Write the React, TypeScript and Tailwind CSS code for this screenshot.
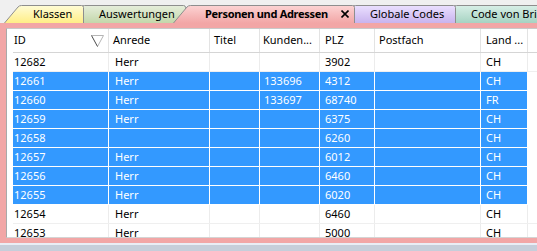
import React from "react";

type TabDef = {
  label: string;
  w: number;
  ml: number;
  from: string;
  to: string;
  z: string;
  pl: string;
  active?: boolean;
};

const tabs: TabDef[] = [
  { label: "Klassen", w: 80, ml: 0, from: "#fffcd6", to: "#ffee86", z: "z-40", pl: "pl-[29px]" },
  { label: "Auswertungen", w: 119, ml: -17, from: "#e6eedb", to: "#c3d7aa", z: "z-30", pl: "pl-[32px]" },
  { label: "Personen und Adressen", w: 182, ml: -13, from: "#fcd3d3", to: "#f2a6a6", z: "z-50", pl: "pl-[32px]", active: true },
  { label: "Globale Codes", w: 118, ml: -17, from: "#ebe0ff", to: "#c8b3ee", z: "z-20", pl: "pl-[32px]" },
  { label: "Code von Bri", w: 121, ml: -17, from: "#d8efe7", to: "#a6d3c2", z: "z-10", pl: "pl-[32px]" },
];

function TabShape({ w, from, to, id }: { w: number; from: string; to: string; id: string }) {
  const d = `M0.5,18 L14,2 Q15.3,0.5 17.5,0.5 L${w - 2.5},0.5 Q${w - 0.5},0.5 ${w - 0.5},2.5 L${w - 0.5},18`;
  return (
    <svg className="absolute inset-0" width={w} height={18} viewBox={`0 0 ${w} 18`}>
      <defs>
        <linearGradient id={id} x1="0" y1="0" x2="0" y2="1">
          <stop offset="0" stopColor={from} />
          <stop offset="1" stopColor={to} />
        </linearGradient>
      </defs>
      <path d={d + " Z"} fill={`url(#${id})`} stroke="none" />
      <path d={d} fill="none" stroke="#8e8e8e" strokeWidth={1} />
    </svg>
  );
}

const cols = [
  { name: "ID", w: "w-[96px]", hp: "pl-[1px]", dp: "pl-[1px]" },
  { name: "Anrede", w: "w-[101px]", hp: "pl-[4px]", dp: "pl-[6px]" },
  { name: "Titel", w: "w-[50px]", hp: "pl-[4px]", dp: "pl-[4px]" },
  { name: "Kunden...", w: "w-[60px]", hp: "pl-[3px]", dp: "pl-[4px]" },
  { name: "PLZ", w: "w-[55px]", hp: "pl-[5px]", dp: "pl-[5px]" },
  { name: "Postfach", w: "w-[106px]", hp: "pl-[4px]", dp: "pl-[4px]" },
  { name: "Land ...", w: "w-[47px]", hp: "pl-[5px]", dp: "pl-[5px]" },
];

const rows: { v: string[]; sel: boolean }[] = [
  { v: ["12682", "Herr", "", "", "3902", "", "CH"], sel: false },
  { v: ["12661", "Herr", "", "133696", "4312", "", "CH"], sel: true },
  { v: ["12660", "Herr", "", "133697", "68740", "", "FR"], sel: true },
  { v: ["12659", "Herr", "", "", "6375", "", "CH"], sel: true },
  { v: ["12658", "", "", "", "6260", "", "CH"], sel: true },
  { v: ["12657", "Herr", "", "", "6012", "", "CH"], sel: true },
  { v: ["12656", "Herr", "", "", "6460", "", "CH"], sel: true },
  { v: ["12655", "Herr", "", "", "6020", "", "CH"], sel: true },
  { v: ["12654", "Herr", "", "", "6460", "", "CH"], sel: false },
  { v: ["12653", "Herr", "", "", "5000", "", "CH"], sel: false },
];

export default function App() {
  return (
    <div
      className="w-[537px] h-[251px] overflow-hidden bg-[#f0f0f0] flex flex-col text-[11px] text-black"
      style={{ fontFamily: '"Noto Sans", "Open Sans", sans-serif' }}
    >
      {/* tab strip */}
      <div className="h-[23px] shrink-0 flex items-end pl-[4px]">
        {tabs.map((t, i) => (
          <div
            key={t.label}
            className={`relative h-[18px] shrink-0 flex items-center ${t.z}`}
            style={{ width: t.w, marginLeft: t.ml }}
          >
            <TabShape w={t.w} from={t.from} to={t.to} id={`tabg${i}`} />
            <span
              className={`relative whitespace-nowrap leading-[18px] ${t.pl} ${t.active ? "font-bold tracking-[-0.3px]" : ""}`}
            >
              {t.label}
            </span>
            {t.active && (
              <svg className="relative ml-auto mr-[6px]" width="8" height="8" viewBox="0 0 8 8">
                <path d="M0.5,0.5 L7.5,7.5 M7.5,0.5 L0.5,7.5" stroke="#000" strokeWidth="1.6" />
              </svg>
            )}
          </div>
        ))}
      </div>

      {/* pink frame */}
      <div className="h-[220px] shrink-0 bg-[#f2a6a6] pt-[5px] pb-[5px] pl-[6px]">
        <div className="h-[210px] bg-white border-l border-t border-b border-l-[#a9a9a9] border-t-[#c9c9c9] border-b-[#d4d4d4] pl-[6px] overflow-hidden flex flex-col">
          {/* header */}
          <div className="h-[24px] shrink-0 flex border-b border-[#d5d5d5]">
            {cols.map((c, i) => (
              <div
                key={c.name}
                className={`${c.w} shrink-0 h-full border-r border-[#e3e3e3] flex items-center ${c.hp} ${i === 0 ? "justify-between pr-[4px]" : ""}`}
              >
                <span className="whitespace-nowrap">{c.name}</span>
                {i === 0 && (
                  <svg width="13" height="12" viewBox="0 0 13 12">
                    <path d="M0.5,0.5 L12.5,0.5 L6.5,11.5" fill="none" stroke="#b5b5b5" strokeWidth="1" />
                    <path d="M0.5,0.5 L6.5,11.5" fill="none" stroke="#4a4a4a" strokeWidth="1" />
                  </svg>
                )}
              </div>
            ))}
            <div className="flex-1" />
          </div>
          {/* rows */}
          {rows.map((r) => (
            <div
              key={r.v[0]}
              className={`h-[19px] shrink-0 flex border-b ${r.sel ? "border-white" : "border-[#efefef]"}`}
            >
              {cols.map((c, i) => (
                <div
                  key={c.name}
                  className={`${c.w} shrink-0 h-full border-r leading-[18px] whitespace-nowrap ${c.dp} ${
                    r.sel ? "bg-[#3399ff] text-white border-white" : "border-[#ececec]"
                  }`}
                >
                  {r.v[i]}
                </div>
              ))}
              <div className="flex-1 bg-white" />
            </div>
          ))}
        </div>
      </div>

      <div className="h-[2px] shrink-0 bg-[#e9edf5]" />
      <div className="h-[6px] shrink-0 bg-[#c6ceda]" />
    </div>
  );
}
